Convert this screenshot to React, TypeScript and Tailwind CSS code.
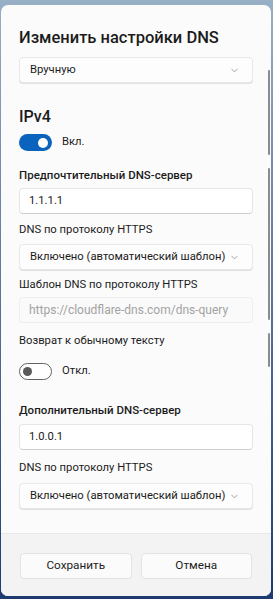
import { ChevronDown } from "lucide-react";

const Label = ({ children, bold, className = "" }: { children: string; bold?: boolean; className?: string }) => (
  <div
    className={`h-4 whitespace-nowrap leading-4 text-[#1b1b1b] ${
      bold ? "text-[11.5px] font-medium" : "text-[11.25px]"
    } ${className}`}
  >
    {children}
  </div>
);

const Field = ({ value, disabled, className = "" }: { value: string; disabled?: boolean; className?: string }) => (
  <div
    className={`flex h-[26px] items-center whitespace-nowrap rounded-[4px] border px-[9px] ${
      disabled
        ? "border-[#eeeeee] bg-[#fafafa] text-[12px] text-[#a3a3a3]"
        : "border-[#e6e6e6] border-b-[#cfcfcf] bg-white text-[11.25px] text-[#1b1b1b]"
    } ${className}`}
  >
    {value}
  </div>
);

const Select = ({ value, className = "" }: { value: string; className?: string }) => (
  <div
    className={`flex h-[26px] items-center justify-between whitespace-nowrap rounded-[4px] border border-[#e8e8e8] bg-[#fdfdfd] pl-[10px] pr-[12px] text-[11.25px] text-[#1b1b1b] shadow-[0_1px_0_#e0e0e0] ${className}`}
  >
    <span>{value}</span>
    <ChevronDown size={11} strokeWidth={1.5} className="text-[#7a7a7a]" />
  </div>
);

const Toggle = ({ on, label, className = "" }: { on: boolean; label: string; className?: string }) => (
  <div className={`flex h-[17px] items-center gap-[10px] ${className}`}>
    {on ? (
      <div className="flex h-[17px] w-[33px] items-center justify-end rounded-full bg-[#0a64be] pr-[4px]">
        <div className="h-[10px] w-[10px] rounded-full bg-white" />
      </div>
    ) : (
      <div className="flex h-[17px] w-[33px] items-center rounded-full border border-[#626262] bg-white pl-[3px]">
        <div className="h-[9px] w-[9px] rounded-full bg-[#5a5a5a]" />
      </div>
    )}
    <span className="text-[11.25px] text-[#1b1b1b]">{label}</span>
  </div>
);

export default function App() {
  return (
    <div
      className="relative flex h-[599px] w-[273px] flex-col overflow-hidden bg-gradient-to-b from-[#97b0c6] to-[#1d3b6e]"
      style={{ fontFamily: 'Roboto, "Noto Sans", sans-serif' }}
    >
      <div className="mb-[3px] ml-[1px] mr-[2px] mt-[5px] flex flex-1 flex-col overflow-hidden rounded-[7px] bg-[#fbfbfb]">
        <div className="flex flex-col px-[18px] pb-[24px] pt-[21px]">
          <div className="h-6 whitespace-nowrap text-[16.5px] font-medium leading-6 text-[#1b1b1b]">Изменить настройки DNS</div>
          <Select value="Вручную" className="mt-[7px]" />
          <div className="mt-[23px] h-[22px] text-[16px] font-medium leading-[22px] text-[#1b1b1b]">IPv4</div>
          <Toggle on label="Вкл." className="mt-[6px]" />
          <Label bold className="mt-[16px]">Предпочтительный DNS-сервер</Label>
          <Field value="1.1.1.1" className="mt-[5px]" />
          <Label className="mt-[8px]">DNS по протоколу HTTPS</Label>
          <Select value="Включено (автоматический шаблон)" className="mt-[6px]" />
          <Label className="mt-[7px]">Шаблон DNS по протоколу HTTPS</Label>
          <Field value="https://cloudflare-dns.com/dns-query" disabled className="mt-[4px]" />
          <Label className="mt-[10px]">Возврат к обычному тексту</Label>
          <Toggle on={false} label="Откл." className="mt-[14px]" />
          <Label bold className="mt-[22px]">Дополнительный DNS-сервер</Label>
          <Field value="1.0.0.1" className="mt-[6px]" />
          <Label className="mt-[10px]">DNS по протоколу HTTPS</Label>
          <Select value="Включено (автоматический шаблон)" className="mt-[7px]" />
        </div>
        <div className="flex flex-1 gap-[9px] border-t border-[#e8e8e8] bg-[#f3f3f3] px-[19px] pt-[19px]">
          <button className="h-[26px] flex-1 rounded-[4px] border border-[#e3e3e3] bg-[#fbfbfb] text-[11.75px] text-[#1b1b1b]">
            Сохранить
          </button>
          <button className="h-[26px] flex-1 rounded-[4px] border border-[#e3e3e3] bg-[#fbfbfb] text-[11.75px] text-[#1b1b1b]">
            Отмена
          </button>
        </div>
      </div>

      {/* scrollbar */}
      <div className="absolute left-[268px] top-[70px] h-[85px] w-[2px] rounded-full bg-[#8c8c8c]" />
      <div className="absolute left-[268px] top-[168px] h-[152px] w-[2px] rounded-full bg-[#8c8c8c]" />
      <div className="absolute left-[268px] top-[333px] h-[34px] w-[2px] rounded-full bg-[#8c8c8c]" />
    </div>
  );
}
